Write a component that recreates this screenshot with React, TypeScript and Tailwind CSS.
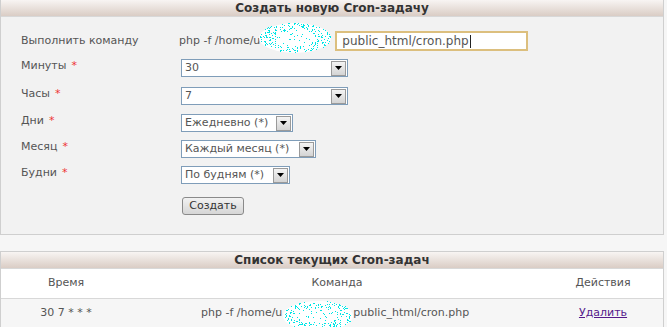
import React from "react";

const Dots = ({ w, h, seed }: { w: number; h: number; seed: number }) => {
  const pts: [number, number][] = [];
  let s = seed;
  const rnd = () => {
    s = (s * 9301 + 49297) % 233280;
    return s / 233280;
  };
  for (let i = 0; i < 420; i++) {
    const x = rnd() * w;
    const y = rnd() * h;
    const dx = (x - w / 2) / (w / 2);
    const dy = (y - h / 2) / (h / 2);
    const r = dx * dx + dy * dy;
    if (r < 1 && (r > 0.3 || rnd() < 0.2)) pts.push([Math.floor(x), Math.floor(y)]);
  }
  return (
    <svg width={w} height={h} className="block">
      <ellipse cx={w / 2} cy={h / 2} rx={w / 2} ry={h / 2} fill="#ffffff" />
      {pts.map(([x, y], i) => (
        <rect key={i} x={x} y={y} width={1} height={1} fill="#00e5e5" />
      ))}
    </svg>
  );
};

const Arrow = () => (
  <span className="flex h-[15px] w-[15px] items-center justify-center border border-[#9a9a9a] bg-gradient-to-b from-[#f4f4f4] to-[#d4d4d4]">
    <svg width="7" height="4" viewBox="0 0 7 4">
      <polygon points="0,0 7,0 3.5,4" fill="#000" />
    </svg>
  </span>
);

const Select = ({ value, w }: { value: string; w: number }) => (
  <div
    className="flex h-[18px] items-center justify-between border border-[#7f9db9] bg-white pl-[3px] pr-[1px] text-[#555]"
    style={{ width: w }}
  >
    <span className="whitespace-nowrap">{value}</span>
    <Arrow />
  </div>
);

const Req = () => <span className="ml-[5px] text-[#e33]">*</span>;

const Header = ({ title }: { title: string }) => (
  <div className="flex h-[17px] items-center justify-center border-b border-[#d8d8d8] bg-gradient-to-b from-[#f8f5f3] to-[#dacdc5] text-[12px] font-bold text-[#333]">
    {title}
  </div>
);

export default function App() {
  return (
    <div
      className="h-[327px] w-[667px] overflow-hidden bg-[#f6f6f6] text-[11px] text-[#555]"
      style={{ fontFamily: "Tahoma, 'DejaVu Sans', sans-serif" }}
    >
      <div className="mr-[3px] h-[235px] border-x border-b border-[#cfcfcf] bg-[#f2f2f2]">
        <Header title="Создать новую Cron-задачу" />
        <div className="pl-[20px] pt-[14px]">
          <div className="flex h-[20px] items-center">
            <div className="w-[158px] shrink-0 whitespace-nowrap">Выполнить команду</div>
            <span className="whitespace-nowrap">php -f /home/u</span>
            <div className="-ml-[1px] mt-[-6px] shrink-0">
              <Dots w={72} h={30} seed={7} />
            </div>
            <div className="ml-[4px] flex h-[20px] w-[193px] shrink-0 items-center border-2 border-[#dcbf7e] bg-white pl-[5px] text-[12px] text-[#555]">
              public_html/cron.php<span className="ml-[1px] h-[13px] w-px bg-[#222]" />
            </div>
          </div>
          <div className="mt-[8px] flex h-[18px] items-center">
            <div className="w-[160px] shrink-0 -translate-y-[2px]">Минуты<Req /></div>
            <Select value="30" w={167} />
          </div>
          <div className="mt-[10px] flex h-[18px] items-center">
            <div className="w-[160px] shrink-0 -translate-y-[2px]">Часы<Req /></div>
            <Select value="7" w={167} />
          </div>
          <div className="mt-[9px] flex h-[18px] items-center">
            <div className="w-[160px] shrink-0 -translate-y-[2px]">Дни<Req /></div>
            <Select value="Ежедневно (*)" w={112} />
          </div>
          <div className="mt-[8px] flex h-[18px] items-center">
            <div className="w-[160px] shrink-0 -translate-y-[2px]">Месяц<Req /></div>
            <Select value="Каждый месяц (*)" w={135} />
          </div>
          <div className="mt-[8px] flex h-[18px] items-center">
            <div className="w-[160px] shrink-0 -translate-y-[2px]">Будни<Req /></div>
            <Select value="По будням (*)" w={109} />
          </div>
          <div className="mt-[13px] flex">
            <div className="w-[161px] shrink-0" />
            <button className="h-[18px] w-[62px] rounded-[3px] border border-[#8a8a8a] bg-gradient-to-b from-[#f2f2f2] to-[#d6d6d6] text-[11px] text-[#333]">
              Создать
            </button>
          </div>
        </div>
      </div>
      <div className="mr-[3px] mt-[16px] border border-[#cfcfcf] bg-white">
        <Header title="Список текущих Cron-задач" />
        <div className="flex h-[30px] items-center border-b border-[#d8d8d8] bg-white">
          <div className="w-[130px] shrink-0 text-center">Время</div>
          <div className="flex-1 text-center">Команда</div>
          <div className="w-[120px] shrink-0 text-center">Действия</div>
        </div>
        <div className="flex h-[28px] items-center bg-[#f6f6f6]">
          <div className="w-[130px] shrink-0 text-center">30 7 * * *</div>
          <div className="flex flex-1 items-center pl-[70px]">
            <span className="whitespace-nowrap">php -f /home/u</span>
            <div className="ml-[1px] mt-[6px] shrink-0">
              <Dots w={70} h={30} seed={13} />
            </div>
            <span className="whitespace-nowrap">public_html/cron.php</span>
          </div>
          <div className="w-[120px] shrink-0 text-center">
            <a className="text-[#551a8b] underline" href="#">Удалить</a>
          </div>
        </div>
      </div>
    </div>
  );
}
